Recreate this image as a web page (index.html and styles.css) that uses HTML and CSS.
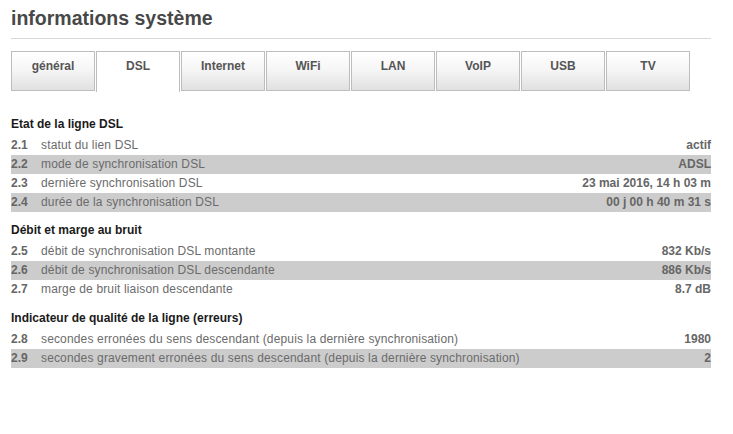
FILE: index.html
```html
<!DOCTYPE html>
<html lang="fr">
<head>
<meta charset="utf-8">
<title>informations système</title>
<link rel="stylesheet" href="styles.css">
</head>
<body>
<div class="page">
  <h1 class="title">informations système</h1>
  <div class="tabs">
    <div class="tab">général</div>
    <div class="tab active">DSL</div>
    <div class="tab">Internet</div>
    <div class="tab">WiFi</div>
    <div class="tab">LAN</div>
    <div class="tab">VoIP</div>
    <div class="tab">USB</div>
    <div class="tab">TV</div>
  </div>

  <section class="section first">
    <h2 class="section-title">Etat de la ligne DSL</h2>
    <div class="row"><span class="num">2.1</span><span class="label">statut du lien DSL</span><span class="value">actif</span></div>
    <div class="row alt"><span class="num">2.2</span><span class="label">mode de synchronisation DSL</span><span class="value">ADSL</span></div>
    <div class="row"><span class="num">2.3</span><span class="label">dernière synchronisation DSL</span><span class="value">23 mai 2016, 14 h 03 m</span></div>
    <div class="row alt"><span class="num">2.4</span><span class="label">durée de la synchronisation DSL</span><span class="value">00 j 00 h 40 m 31 s</span></div>
  </section>

  <section class="section">
    <h2 class="section-title">Débit et marge au bruit</h2>
    <div class="row"><span class="num">2.5</span><span class="label">débit de synchronisation DSL montante</span><span class="value">832 Kb/s</span></div>
    <div class="row alt"><span class="num">2.6</span><span class="label">débit de synchronisation DSL descendante</span><span class="value">886 Kb/s</span></div>
    <div class="row"><span class="num">2.7</span><span class="label">marge de bruit liaison descendante</span><span class="value">8.7 dB</span></div>
  </section>

  <section class="section errors">
    <h2 class="section-title">Indicateur de qualité de la ligne (erreurs)</h2>
    <div class="row"><span class="num">2.8</span><span class="label">secondes erronées du sens descendant (depuis la dernière synchronisation)</span><span class="value">1980</span></div>
    <div class="row alt"><span class="num">2.9</span><span class="label">secondes gravement erronées du sens descendant (depuis la dernière synchronisation)</span><span class="value">2</span></div>
  </section>
</div>
</body>
</html>
```

FILE: styles.css
```css
html, body {
  margin: 0;
  padding: 0;
  background: #ffffff;
}

body {
  font-family: "Liberation Sans", Arial, sans-serif;
  font-size: 12px;
  color: #666666;
}

.page {
  width: 700px;
  padding: 6px 0 0 11px;
}

.title {
  margin: 0;
  font-size: 19.5px;
  line-height: 24px;
  font-weight: bold;
  color: #484848;
  padding-bottom: 8px;
  border-bottom: 1px solid #d9d9d9;
}

.tabs {
  display: flex;
  margin-top: 12px;
  height: 41px;
}

.tab {
  box-sizing: border-box;
  width: 84px;
  height: 40px;
  margin-right: 1px;
  border: 1px solid #bdbdbd;
  background: linear-gradient(to bottom, #ffffff 0%, #f6f6f6 45%, #e1e1e1 100%);
  text-align: center;
  font-weight: bold;
  font-size: 12px;
  line-height: 15px;
  padding-top: 7px;
  color: #555555;
}

.tab.active {
  background: #ffffff;
  height: 41px;
  border-bottom: none;
}

.section {
  margin-top: 10px;
}

.section.first {
  margin-top: 24px;
}

.section.errors {
  margin-top: 11px;
}

.section-title {
  margin: 0 0 4px 0;
  font-size: 12px;
  line-height: 16px;
  font-weight: bold;
  color: #1a1a1a;
}

.row {
  display: flex;
  height: 19px;
  line-height: 19px;
}

.row.alt {
  background: #cccccc;
}

.num {
  width: 30px;
  font-weight: bold;
  color: #666666;
}

.label {
  flex: 1;
  color: #6b6b6b;
  letter-spacing: 0.15px;
}

.value {
  font-weight: bold;
  color: #666666;
  text-align: right;
}
```
